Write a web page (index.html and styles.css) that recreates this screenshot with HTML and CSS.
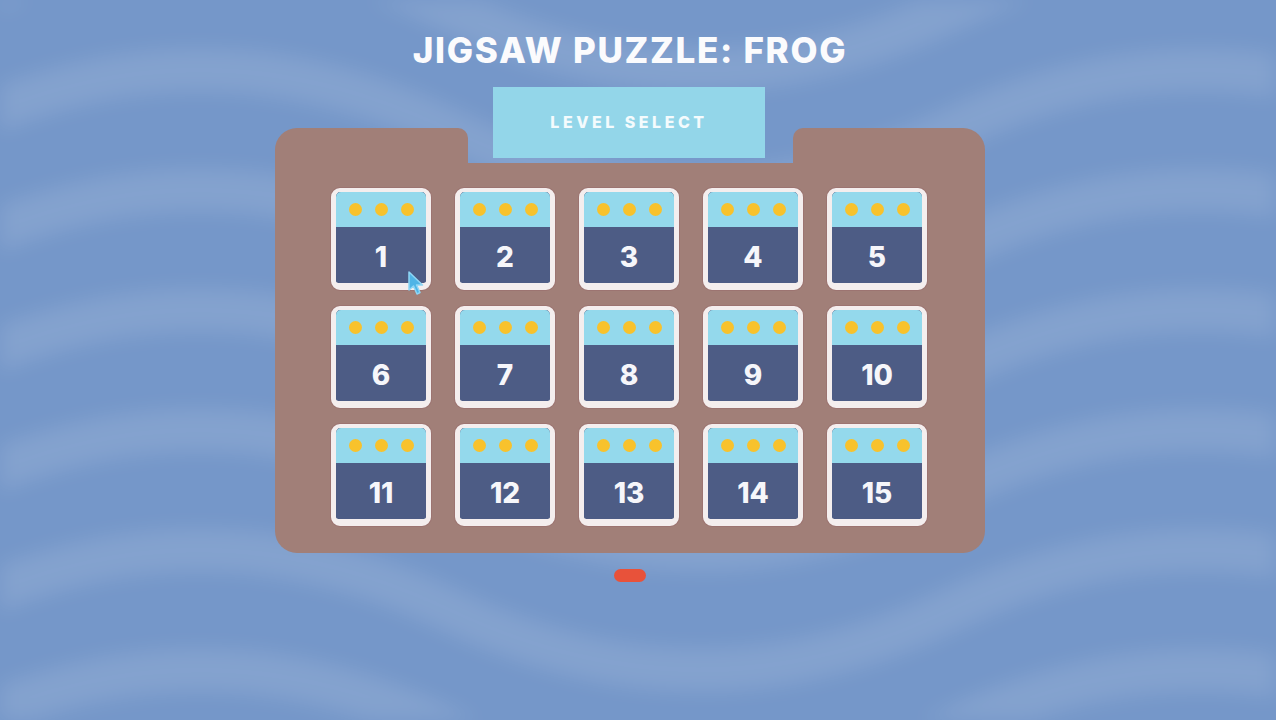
FILE: index.html
```html
<!DOCTYPE html>
<html lang="en">

<head>
	<meta charset="UTF-8" />
	<meta name="viewport" content="width=device-width, initial-scale=1.0" />
	<title>Jigsaw Puzzle: Frog</title>
	<link rel="stylesheet" href="styles.css">
</head>

<body>

	<!-- wavy backdrop -->
	<svg class="waves" width="1276" height="720" viewBox="0 0 1276 720">
		<g fill="none" stroke="#ffffff" stroke-opacity="0.11" stroke-width="44">
			<path d="M -550 10 Q -300 130 -50 10 T 450 10 T 950 10 T 1450 10" />
			<path d="M -550 130 Q -300 250 -50 130 T 450 130 T 950 130 T 1450 130" />
			<path d="M -550 250 Q -300 370 -50 250 T 450 250 T 950 250 T 1450 250" />
			<path d="M -550 370 Q -300 490 -50 370 T 450 370 T 950 370 T 1450 370" />
			<path d="M -550 490 Q -300 610 -50 490 T 450 490 T 950 490 T 1450 490" />
			<path d="M -550 610 Q -300 730 -50 610 T 450 610 T 950 610 T 1450 610" />
			<path d="M -550 730 Q -300 850 -50 730 T 450 730 T 950 730 T 1450 730" />
		</g>
	</svg>

	<main class="stage">
		<h1 class="title">JIGSAW PUZZLE: FROG</h1>

		<div class="board">
			<div class="board-top">
				<div class="tab tab-left"></div>
				<div class="banner">LEVEL SELECT</div>
				<div class="tab tab-right"></div>
			</div>
			<div class="levels" id="levels"></div>
		</div>

		<div class="pager">
			<span class="page active"></span>
		</div>
	</main>

	<script>
		const levels = document.getElementById('levels');

		for (let n = 1; n <= 15; n++) {
			const tile = document.createElement('div');
			tile.className = 'level';
			tile.innerHTML =
				'<div class="stars"><span></span><span></span><span></span></div>' +
				'<div class="num">' + n + '</div>';

			// pointer hovering over the first level
			if (n === 1) {
				tile.innerHTML +=
					'<svg class="cursor" width="18" height="26" viewBox="0 0 18 26">' +
					'<path d="M2 2 L2 20 L6.5 16 L10 24 L13 22.5 L9.5 15 L15.5 15 Z" fill="#4fb4e6" stroke="#8fd6f5" stroke-width="1.5" stroke-linejoin="round"/>' +
					'</svg>';
			}

			levels.appendChild(tile);
		}
	</script>

</body>

</html>
```

FILE: styles.css
```css
* {
	box-sizing: border-box;
	margin: 0;
	padding: 0;
}

body {
	font-family: 'Inter', 'Open Sans', sans-serif;
	background: #7597c9;
	width: 1276px;
	height: 720px;
	overflow: hidden;
	position: relative;
	display: flex;
	justify-content: center;
	padding-right: 16px;
}

.waves {
	position: absolute;
	top: 0;
	left: 0;
	filter: blur(10px);
}

.stage {
	position: relative;
	width: 710px;
	padding-top: 30px;
	display: flex;
	flex-direction: column;
	align-items: center;
}

.title {
	font-size: 35px;
	line-height: 40px;
	font-weight: 800;
	color: #fbfbfd;
	letter-spacing: 1.7px;
	text-align: center;
	white-space: nowrap;
}

.board {
	width: 710px;
	margin-top: 17px;
}

.board-top {
	display: flex;
	align-items: flex-end;
	height: 76px;
}

.tab {
	height: 35px;
	background: #a17f78;
}

.tab-left {
	width: 193px;
	border-radius: 22px 10px 0 0;
}

.tab-right {
	width: 192px;
	border-radius: 10px 22px 0 0;
}

.banner {
	width: 272px;
	height: 71px;
	margin: 0 28px 5px 25px;
	background: #93d6e9;
	color: #f4fbfd;
	font-size: 16px;
	font-weight: 800;
	letter-spacing: 3.5px;
	line-height: 71px;
	text-align: center;
}

.levels {
	background: #a17f78;
	border-radius: 0 0 22px 22px;
	padding: 25px 59px 27px 56px;
	display: grid;
	grid-template-columns: repeat(5, 100px);
	grid-auto-rows: 102px;
	column-gap: 24px;
	row-gap: 16px;
}

.level {
	position: relative;
	display: flex;
	flex-direction: column;
	background: #4d5c85;
	border: 4px solid #f4eeee;
	border-left-width: 5px;
	border-right-width: 5px;
	border-bottom-width: 7px;
	border-radius: 9px;
	box-shadow: 0 0 0 1px rgba(150, 105, 105, 0.45);
}

.stars {
	height: 35px;
	background: #94d9ec;
	border-radius: 5px 5px 0 0;
	display: flex;
	justify-content: center;
	align-items: center;
	gap: 13px;
}

.stars span {
	width: 13px;
	height: 13px;
	border-radius: 50%;
	background: #f8c22c;
}

.num {
	flex: 1;
	display: flex;
	justify-content: center;
	align-items: center;
	padding-top: 4px;
	color: #f6f6fa;
	font-size: 28px;
	font-weight: 800;
}

.cursor {
	position: absolute;
	left: 71px;
	top: 78px;
}

.pager {
	margin-top: 16px;
	display: flex;
	justify-content: center;
}

.page {
	width: 32px;
	height: 13px;
	border-radius: 7px;
	background: #e8523a;
}
```
